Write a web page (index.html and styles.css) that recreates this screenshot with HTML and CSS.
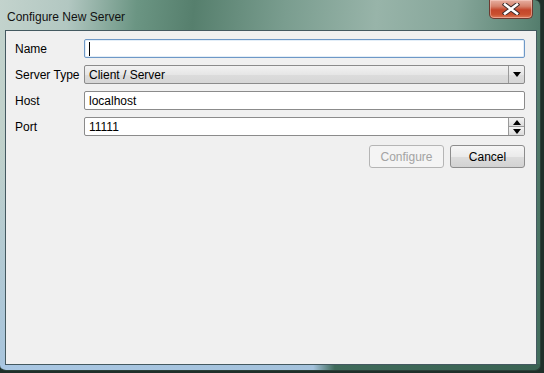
FILE: index.html
```html
<!DOCTYPE html>
<html lang="en">
<head>
    <meta charset="UTF-8">
    <title>Configure New Server</title>
    <link rel="stylesheet" href="styles.css">
</head>
<body>
    <div class="window">
        <div class="titlebar">
            <span class="title">Configure New Server</span>
            <div class="close-btn">
                <svg width="18" height="12" viewBox="0 0 18 12">
                    <path d="M3 1.5 L15 10.5 M15 1.5 L3 10.5" stroke="#3a2a2a" stroke-width="4.5" stroke-linecap="square"/>
                    <path d="M3 1.5 L15 10.5 M15 1.5 L3 10.5" stroke="#ffffff" stroke-width="2.6" stroke-linecap="square"/>
                </svg>
            </div>
        </div>
        <div class="content">
            <div class="form-row">
                <label>Name</label>
                <div class="field focused"><span class="caret"></span></div>
            </div>
            <div class="form-row">
                <label>Server Type</label>
                <div class="field combo">
                    <span class="value">Client / Server</span>
                    <span class="combo-arrow">
                        <svg width="8" height="5" viewBox="0 0 8 5"><path d="M0 0 H8 L4 5 Z" fill="#000"/></svg>
                    </span>
                </div>
            </div>
            <div class="form-row">
                <label>Host</label>
                <div class="field"><span class="value">localhost</span></div>
            </div>
            <div class="form-row">
                <label>Port</label>
                <div class="field spinner">
                    <span class="value">11111</span>
                    <span class="spin-buttons">
                        <span class="spin"><svg width="8" height="5" viewBox="0 0 8 5"><path d="M0 5 H8 L4 0 Z" fill="#000"/></svg></span>
                        <span class="spin"><svg width="8" height="5" viewBox="0 0 8 5"><path d="M0 0 H8 L4 5 Z" fill="#000"/></svg></span>
                    </span>
                </div>
            </div>
            <div class="actions">
                <button class="btn" disabled>Configure</button>
                <button class="btn">Cancel</button>
            </div>
        </div>
    </div>
</body>
</html>
```

FILE: styles.css
```css
* {
    box-sizing: border-box;
    margin: 0;
    padding: 0;
}

body {
    width: 544px;
    height: 373px;
    overflow: hidden;
    background-color: #1f2f29;
    font-family: 'Liberation Sans', Arial, sans-serif;
    font-size: 12px;
    color: #000;
}

.window {
    width: 541px;
    height: 371px;
    display: flex;
    flex-direction: column;
    border-radius: 0 6px 6px 6px;
    border-right: 1px solid #2a3f37;
    border-bottom: 1px solid #2a3f37;
    background:
        linear-gradient(90deg, #a9c7e3 0%, #a4c2dc 58%, #3f6a5a 62%, #3a6353 100%) bottom / 100% 6px no-repeat,
        linear-gradient(180deg, rgba(255,255,255,0) 0%, rgba(166,196,224,0) 40%, rgba(166,196,224,0.9) 100%) left / 6px 100% no-repeat,
        linear-gradient(95deg, #c3d3cd 0%, #b2c7c1 12%, #6b9583 24%, #567f6d 34%, #7a9d8f 50%, #98b4a9 66%, #86a69a 80%, #5e8676 92%, #406b5b 100%);
}

.titlebar {
    height: 30px;
    display: flex;
    align-items: flex-start;
    padding-left: 7px;
    flex-shrink: 0;
}

.title {
    font-family: 'Liberation Sans', Arial, sans-serif;
    font-size: 12px;
    color: #111;
    margin-top: 10px;
}

.close-btn {
    margin-left: auto;
    margin-right: 7px;
    width: 44px;
    height: 19px;
    display: flex;
    align-items: center;
    justify-content: center;
    border: 1px solid #6b3a30;
    border-top: none;
    border-radius: 0 0 5px 5px;
    background: linear-gradient(180deg, #e7b0a2 0%, #d5826c 35%, #c4462b 55%, #c9502f 80%, #dd7a58 100%);
    box-shadow: inset 0 0 0 1px rgba(255, 220, 210, 0.45);
}

.content {
    flex: 1;
    margin: 0 3px 5px 5px;
    background-color: #f0f0f0;
    border: 1px solid #445960;
    padding: 8px 11px 0 9px;
    display: flex;
    flex-direction: column;
    gap: 7px;
}

.form-row {
    display: flex;
    align-items: center;
    height: 19px;
}

.form-row label {
    width: 69px;
    flex-shrink: 0;
}

.field {
    flex: 1;
    height: 19px;
    border: 1px solid #8b8b8b;
    border-radius: 2px;
    background-color: #fff;
    display: flex;
    align-items: center;
    padding-left: 4px;
}

.field.focused {
    border-color: #6e98c6;
    box-shadow: inset 0 0 0 1px #e3eef8;
}

.caret {
    width: 1px;
    height: 14px;
    background-color: #000;
}

.value {
    flex: 1;
}

.combo {
    background: linear-gradient(180deg, #f2f2f2 0%, #e6e6e6 50%, #dcdcdc 51%, #d6d6d6 100%);
    padding-right: 0;
}

.combo-arrow {
    width: 16px;
    height: 100%;
    border-left: 1px solid #9a9a9a;
    display: flex;
    align-items: center;
    justify-content: center;
}

.spinner {
    padding-right: 0;
}

.spin-buttons {
    width: 16px;
    height: 100%;
    display: flex;
    flex-direction: column;
    border-left: 1px solid #9a9a9a;
}

.spin {
    flex: 1;
    display: flex;
    align-items: center;
    justify-content: center;
    background: linear-gradient(180deg, #f3f3f3 0%, #dcdcdc 100%);
}

.spin + .spin {
    border-top: 1px solid #9a9a9a;
}

.actions {
    display: flex;
    justify-content: flex-end;
    gap: 6px;
    margin-top: 2px;
}

.btn {
    width: 75px;
    height: 23px;
    font-family: 'Liberation Sans', Arial, sans-serif;
    font-size: 12px;
    color: #000;
    border: 1px solid #8d8d8d;
    border-radius: 3px;
    background: linear-gradient(180deg, #f6f6f6 0%, #ebebeb 50%, #dddddd 51%, #d2d2d2 100%);
}

.btn:disabled {
    color: #a3a3a3;
    border-color: #b5b5b5;
    background: #f4f4f4;
}
```
